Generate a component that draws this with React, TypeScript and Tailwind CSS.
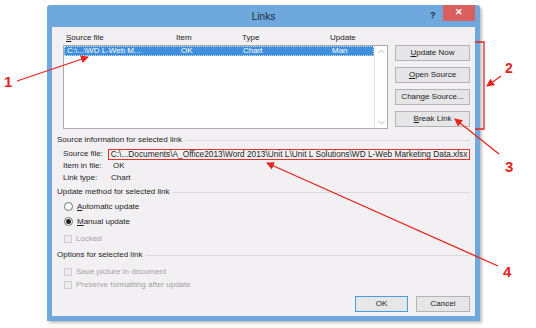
import React from "react";

const U = ({ children }: { children: React.ReactNode }) => <span className="underline">{children}</span>;

function Btn({ children, def }: { children: React.ReactNode; def?: boolean }) {
  return (
    <div
      className={
        "h-[16px] flex items-center justify-center border bg-[#e6e5e8] text-[8px] leading-[10px] text-[#1c1c1c] " +
        (def ? "border-[#4a9be0]" : "border-[#b4b4b4]")
      }
    >
      {children}
    </div>
  );
}

function Heading({ children }: { children: React.ReactNode }) {
  return (
    <div className="h-[10px] flex items-center gap-[3px] text-[8px] leading-[10px] text-[#1c1c1c]">
      <span className="whitespace-nowrap">{children}</span>
      <div className="flex-1 h-px bg-[#dcdadd]" />
    </div>
  );
}

function Check({ label }: { label: string }) {
  return (
    <div className="flex items-center gap-[4px] pl-[7px] h-full text-[8px] leading-[10px] text-[#a3a1a5]">
      <div className="w-[8px] h-[8px] border border-[#cfcdd1] bg-[#eceaed]" />
      <span>{label}</span>
    </div>
  );
}

export default function App() {
  return (
    <div
      className="relative w-[536px] h-[328px] bg-white overflow-hidden"
      style={{ fontFamily: '"Liberation Sans", Arial, sans-serif' }}
    >
      {/* dialog window */}
      <div className="absolute left-[47px] top-[5px] w-[433px] h-[316px] bg-[#6fa8dc] rounded-t-[3px] flex flex-col shadow-[2px_2px_3px_rgba(0,0,0,0.25)]">
        <div className="relative h-[22px] flex items-center justify-center">
          <span className="text-[10px] text-[#1e2a38]">Links</span>
          <span className="absolute left-[383px] top-[4px] text-[9px] font-bold text-[#1e2a38]">?</span>
          <div className="absolute left-[396px] top-0 w-[32px] h-[16px] bg-[#d9605e] flex items-center justify-center text-white text-[9px] font-bold">
            ✕
          </div>
        </div>
        <div className="flex-1 mx-[5px] mb-[5px] bg-[#f3f0f3] px-[5px] flex flex-col">
          {/* top: list + buttons */}
          <div className="flex">
            <div className="ml-[6px] w-[325px] flex flex-col">
              <div className="relative h-[18px] text-[8px] leading-[10px] text-[#1c1c1c]">
                <span className="absolute left-[3px] top-[6px]">
                  <U>S</U>ource file
                </span>
                <span className="absolute left-[113px] top-[6px]">Item</span>
                <span className="absolute left-[179px] top-[6px]">Type</span>
                <span className="absolute left-[267px] top-[6px]">Update</span>
              </div>
              <div className="h-[84px] border border-[#a9a9ab] bg-white flex">
                <div className="flex-1">
                  <div className="relative h-[10px] bg-[#3f8fdc] border border-dotted border-[#d0e4f7] text-[8px] leading-[8px] text-white">
                    <span className="absolute left-[2px] top-0">C:\...\WD L-Web M...</span>
                    <span className="absolute left-[116px] top-0">OK</span>
                    <span className="absolute left-[178px] top-0">Chart</span>
                    <span className="absolute left-[267px] top-0">Man</span>
                  </div>
                </div>
                <div className="w-[13px] border-l border-[#e4e4e4] flex flex-col justify-between items-center py-[3px]">
                  <svg width="7" height="5" viewBox="0 0 7 5">
                    <path d="M0.5 4 L3.5 1 L6.5 4" fill="none" stroke="#b9b9b9" strokeWidth="1" />
                  </svg>
                  <svg width="7" height="5" viewBox="0 0 7 5">
                    <path d="M0.5 1 L3.5 4 L6.5 1" fill="none" stroke="#b9b9b9" strokeWidth="1" />
                  </svg>
                </div>
              </div>
            </div>
            <div className="ml-auto w-[75px] pt-[18px] flex flex-col gap-[6px]">
              <Btn>
                <U>U</U>pdate Now
              </Btn>
              <Btn>
                <U>O</U>pen Source
              </Btn>
              <Btn>
                Chan<U>g</U>e Source...
              </Btn>
              <Btn>
                <U>B</U>reak Link
              </Btn>
            </div>
          </div>

          <div className="mt-[6px]">
            <Heading>Source information for selected link</Heading>
          </div>
          <div className="mt-[3px] pl-[6px] text-[8px] leading-[12px] text-[#1c1c1c]">
            <div className="flex h-[12px] items-center">
              <span className="w-[45px]">Source file:</span>
              <span className="border border-[#e8302a] h-[11px] flex items-center pl-[2px] pr-[2px] w-[364px] whitespace-nowrap overflow-hidden text-[8.3px]">
                C:\...Documents\A_Office2013\Word 2013\Unit L\Unit L Solutions\WD L-Web Marketing Data.xlsx
              </span>
            </div>
            <div className="flex h-[12px] items-center">
              <span className="w-[50px]">Item in file:</span>
              <span>OK</span>
            </div>
            <div className="flex h-[12px] items-center">
              <span className="w-[48px]">Link type:</span>
              <span>Chart</span>
            </div>
          </div>

          <div className="mt-[3px]">
            <Heading>Update method for selected link</Heading>
          </div>
          <div className="mt-[2px] pl-[7px] text-[8px] leading-[10px] text-[#1c1c1c]">
            <div className="h-[15px] flex items-center gap-[4px]">
              <div className="w-[9px] h-[9px] rounded-full border border-[#6e6e6e] bg-white" />
              <span>
                <U>A</U>utomatic update
              </span>
            </div>
            <div className="h-[15px] flex items-center gap-[4px]">
              <div className="w-[9px] h-[9px] rounded-full border border-[#6e6e6e] bg-white flex items-center justify-center">
                <div className="w-[5px] h-[5px] rounded-full bg-[#222]" />
              </div>
              <span>
                <U>M</U>anual update
              </span>
            </div>
          </div>
          <div className="mt-[3px] h-[14px]">
            <Check label="Locked" />
          </div>

          <div className="mt-[4px]">
            <Heading>Options for selected link</Heading>
          </div>
          <div className="mt-[5px] h-[13px]">
            <Check label="Save picture in document" />
          </div>
          <div className="h-[13px]">
            <Check label="Preserve formatting after update" />
          </div>

          <div className="mt-[5px] flex justify-end gap-[8px]">
            <div className="w-[53px]">
              <Btn def>OK</Btn>
            </div>
            <div className="w-[54px]">
              <Btn>Cancel</Btn>
            </div>
          </div>
        </div>
      </div>

      {/* annotations */}
      <svg className="absolute inset-0 pointer-events-none" width="536" height="328" viewBox="0 0 536 328">
        <defs>
          <marker id="ah" markerWidth="8" markerHeight="8" refX="7" refY="4" orient="auto" markerUnits="userSpaceOnUse">
            <path d="M0 0 L8 4 L0 8 Z" fill="#e5241d" />
          </marker>
        </defs>
        <g stroke="#e5241d" strokeWidth="1.3" fill="none">
          <line x1="17" y1="81" x2="88" y2="57" markerEnd="url(#ah)" />
          <polyline points="475,42 484,42 484,129 475,129" />
          <line x1="501" y1="76" x2="487" y2="86" markerEnd="url(#ah)" />
          <line x1="499" y1="154" x2="455" y2="119" markerEnd="url(#ah)" />
          <line x1="498" y1="266" x2="267" y2="163" markerEnd="url(#ah)" />
        </g>
      </svg>
      <span className="absolute left-[4px] top-[74px] text-[15px] leading-[16px] font-bold text-[#e5241d]">1</span>
      <span className="absolute left-[505px] top-[60px] text-[14px] leading-[16px] font-bold text-[#e5241d]">2</span>
      <span className="absolute left-[505px] top-[159px] text-[15px] leading-[16px] font-bold text-[#e5241d]">3</span>
      <span className="absolute left-[503px] top-[264px] text-[15px] leading-[16px] font-bold text-[#e5241d]">4</span>
    </div>
  );
}
